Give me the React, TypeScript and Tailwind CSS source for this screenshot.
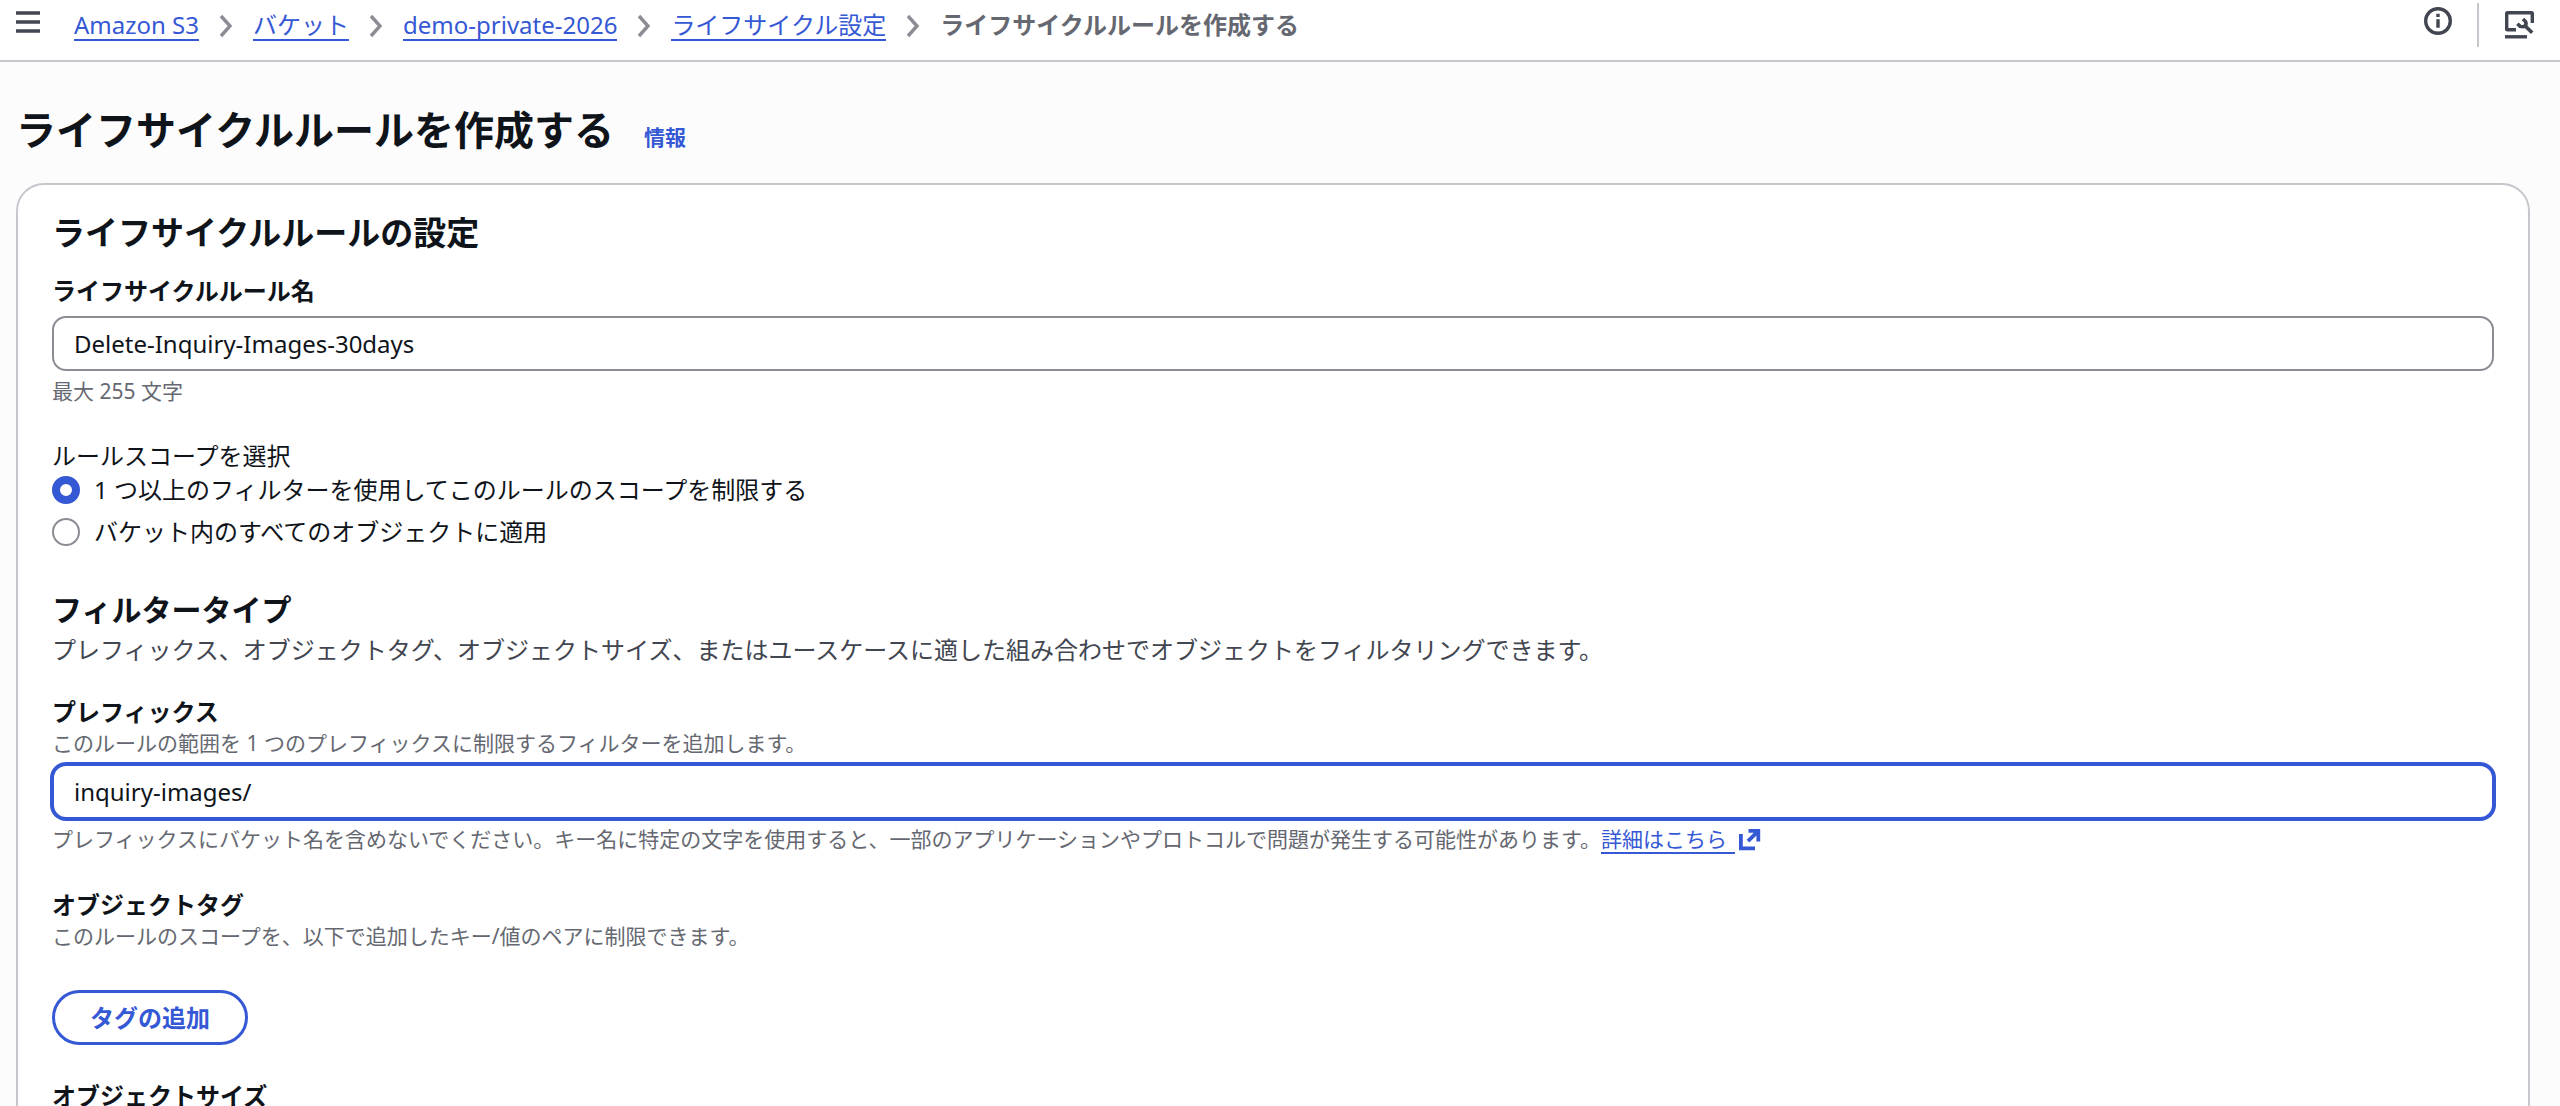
import { useState } from "react";
import type { ReactNode } from "react";

const breadcrumbs = ["Amazon S3", "バケット", "demo-private-2026", "ライフサイクル設定"];

function MenuIcon() {
    return (
        <svg width="24" height="22" viewBox="0 0 24 22" stroke="#424650" strokeWidth="3.4" aria-hidden="true">
            <path d="M0 2h24M0 11h24M0 20h24" />
        </svg>
    );
}

function ChevronIcon() {
    return (
        <svg width="14" height="24" viewBox="0 0 14 24" fill="none" stroke="#8c8c94" strokeWidth="3.4" aria-hidden="true">
            <path d="M2 2l9 10-9 10" />
        </svg>
    );
}

function InfoIcon() {
    return (
        <svg width="28" height="28" viewBox="0 0 28 28" fill="none" stroke="#424650" aria-hidden="true">
            <circle cx="14" cy="14" r="12.3" strokeWidth="3.4" />
            <path d="M14 6.7v3.4M14 12.2v8.6" strokeWidth="3.4" />
        </svg>
    );
}

function ToolsIcon() {
    return (
        <svg width="30" height="28" viewBox="0 0 30 28" fill="none" stroke="#424650" aria-hidden="true">
            <path d="M11 18.700H2.500Q1.700 18.700 1.700 17.900V2.500Q1.700 1.700 2.500 1.700H26.500Q27.300 1.700 27.300 2.500V12" strokeWidth="3.400" />
            <path d="M0 25.800H22" strokeWidth="3.400" />
            <path d="M20.500 15.200L27.200 21.800" strokeWidth="3.600" />
            <path d="M18 8L20.300 10.300Q21.800 12.800 20.300 14.800Q18.200 16.400 15.200 15.400L12.400 12.800" strokeWidth="3.600" />
        </svg>
    );
}

function ExternalIcon() {
    return (
        <svg width="22" height="22" viewBox="0 0 22 22" fill="none" stroke="#3558d4" strokeWidth="3.8" aria-hidden="true">
            <path d="M1.900 5V19.300H16M9.500 1.900H19.300V12.500M19.200 2.200L9 12.200" />
        </svg>
    );
}

function Label({ htmlFor, children }: { htmlFor: string; children: ReactNode }) {
    return (
        <label htmlFor={htmlFor} className="block text-2xl leading-[34px] font-bold">
            {children}
        </label>
    );
}

function Hint({ className = "", children }: { className?: string; children: ReactNode }) {
    return <p className={`text-[21px] leading-7 text-[#656871] ${className}`}>{children}</p>;
}

function ScopeOption({
    label,
    checked,
    onChange,
}: {
    label: string;
    checked: boolean;
    onChange: () => void;
}) {
    return (
        <label className="flex items-center gap-[14px] text-2xl leading-[34px]">
            <input
                type="radio"
                name="scope"
                checked={checked}
                onChange={onChange}
                className="size-7 shrink-0 appearance-none rounded-full border-2 border-[#8c8c94] bg-white checked:border-8 checked:border-[#3558d4]"
            />
            {label}
        </label>
    );
}

export default function App() {
    const [ruleName, setRuleName] = useState("Delete-Inquiry-Images-30days");
    const [prefix, setPrefix] = useState("inquiry-images/");
    const [scope, setScope] = useState("filter");

    return (
        <div
            lang="ja"
            className="h-screen overflow-hidden bg-[#fcfcfd] font-['Noto_Sans','Noto_Sans_CJK_JP',sans-serif] text-[#0f141a]"
        >
            <header className="flex h-[62px] items-start justify-between border-b-2 border-[#c6c6cd] bg-white pr-[25px] pl-4">
                <div className="flex items-start">
                    <button type="button" aria-label="メニュー" className="pt-[11px]">
                        <MenuIcon />
                    </button>
                    <nav aria-label="パンくず" className="pt-[11px] pl-[34px]">
                        <ol className="flex items-center gap-5 text-2xl leading-7">
                            {breadcrumbs.map((item) => (
                                <li key={item} className="flex items-center gap-5">
                                    <a href="#" className="border-b-2 border-[#3558d4] text-[#3558d4]">
                                        {item}
                                    </a>
                                    <ChevronIcon />
                                </li>
                            ))}
                            <li className="border-b-2 border-transparent font-bold text-[#656871]">
                                ライフサイクルルールを作成する
                            </li>
                        </ol>
                    </nav>
                </div>
                <div className="flex items-start">
                    <button type="button" aria-label="情報" className="pt-[7px]">
                        <InfoIcon />
                    </button>
                    <div className="mt-[3px] mr-[26px] ml-[25px] h-11 w-[2px] bg-[#c6c6cd]" />
                    <button type="button" aria-label="ツール" className="pt-[11px]">
                        <ToolsIcon />
                    </button>
                </div>
            </header>

            <main className="pr-[30px] pl-4">
                <div className="flex items-baseline gap-[30px] pt-10">
                    <h1 className="text-[40px] leading-[56px] font-bold">ライフサイクルルールを作成する</h1>
                    <a href="#" className="text-[21px] leading-7 font-bold text-[#3558d4]">
                        情報
                    </a>
                </div>

                <section className="mt-[25px] rounded-[28px] border-2 border-[#c6c6cd] bg-white px-[34px] pt-7 pb-10">
                    <h2 className="text-[33px] leading-10 font-bold">ライフサイクルルールの設定</h2>

                    <div className="mt-[21px]">
                        <Label htmlFor="rule-name">ライフサイクルルール名</Label>
                        <input
                            id="rule-name"
                            type="text"
                            value={ruleName}
                            onChange={(e) => setRuleName(e.target.value)}
                            className="mt-2 block h-[55px] w-full rounded-[14px] border-2 border-[#8c8c94] bg-white px-5 text-2xl outline-none"
                        />
                        <Hint className="mt-[6px]">最大 255 文字</Hint>
                    </div>

                    <fieldset className="mt-[34px]">
                        <legend className="text-2xl leading-[34px]">ルールスコープを選択</legend>
                        <div className="flex flex-col gap-2">
                            <ScopeOption
                                label="1 つ以上のフィルターを使用してこのルールのスコープを制限する"
                                checked={scope === "filter"}
                                onChange={() => setScope("filter")}
                            />
                            <ScopeOption
                                label="バケット内のすべてのオブジェクトに適用"
                                checked={scope === "all"}
                                onChange={() => setScope("all")}
                            />
                        </div>
                    </fieldset>

                    <h3 className="mt-[42px] text-[30px] leading-[38px] font-bold">フィルタータイプ</h3>
                    <p className="mt-1 text-2xl leading-[34px] text-[#424650]">
                        プレフィックス、オブジェクトタグ、オブジェクトサイズ、またはユースケースに適した組み合わせでオブジェクトをフィルタリングできます。
                    </p>

                    <div className="mt-7">
                        <Label htmlFor="prefix">プレフィックス</Label>
                        <Hint>このルールの範囲を 1 つのプレフィックスに制限するフィルターを追加します。</Hint>
                        <input
                            id="prefix"
                            type="text"
                            value={prefix}
                            onChange={(e) => setPrefix(e.target.value)}
                            className="mt-[7px] block h-[55px] w-full rounded-[14px] border-2 border-[#3558d4] bg-white px-5 text-2xl ring-2 ring-[#3558d4] outline-none"
                        />
                        <Hint className="mt-[6px]">
                            プレフィックスにバケット名を含めないでください。キー名に特定の文字を使用すると、一部のアプリケーションやプロトコルで問題が発生する可能性があります。
                            <a href="#" className="inline-flex items-center gap-1 text-[#3558d4]">
                                <span className="border-b-2 border-[#3558d4] pr-2 leading-[26px]">詳細はこちら</span>
                                <ExternalIcon />
                            </a>
                        </Hint>
                    </div>

                    <div className="mt-[34px]">
                        <h4 className="text-2xl leading-[34px] font-bold">オブジェクトタグ</h4>
                        <Hint>このルールのスコープを、以下で追加したキー/値のペアに制限できます。</Hint>
                        <button
                            type="button"
                            className="mt-10 h-[55px] rounded-full border-[3px] border-[#3558d4] bg-white px-[35px] text-2xl font-bold text-[#3558d4]"
                        >
                            タグの追加
                        </button>
                    </div>

                    <h4 className="mt-[34px] text-2xl leading-[34px] font-bold">オブジェクトサイズ</h4>
                </section>
            </main>
        </div>
    );
}
